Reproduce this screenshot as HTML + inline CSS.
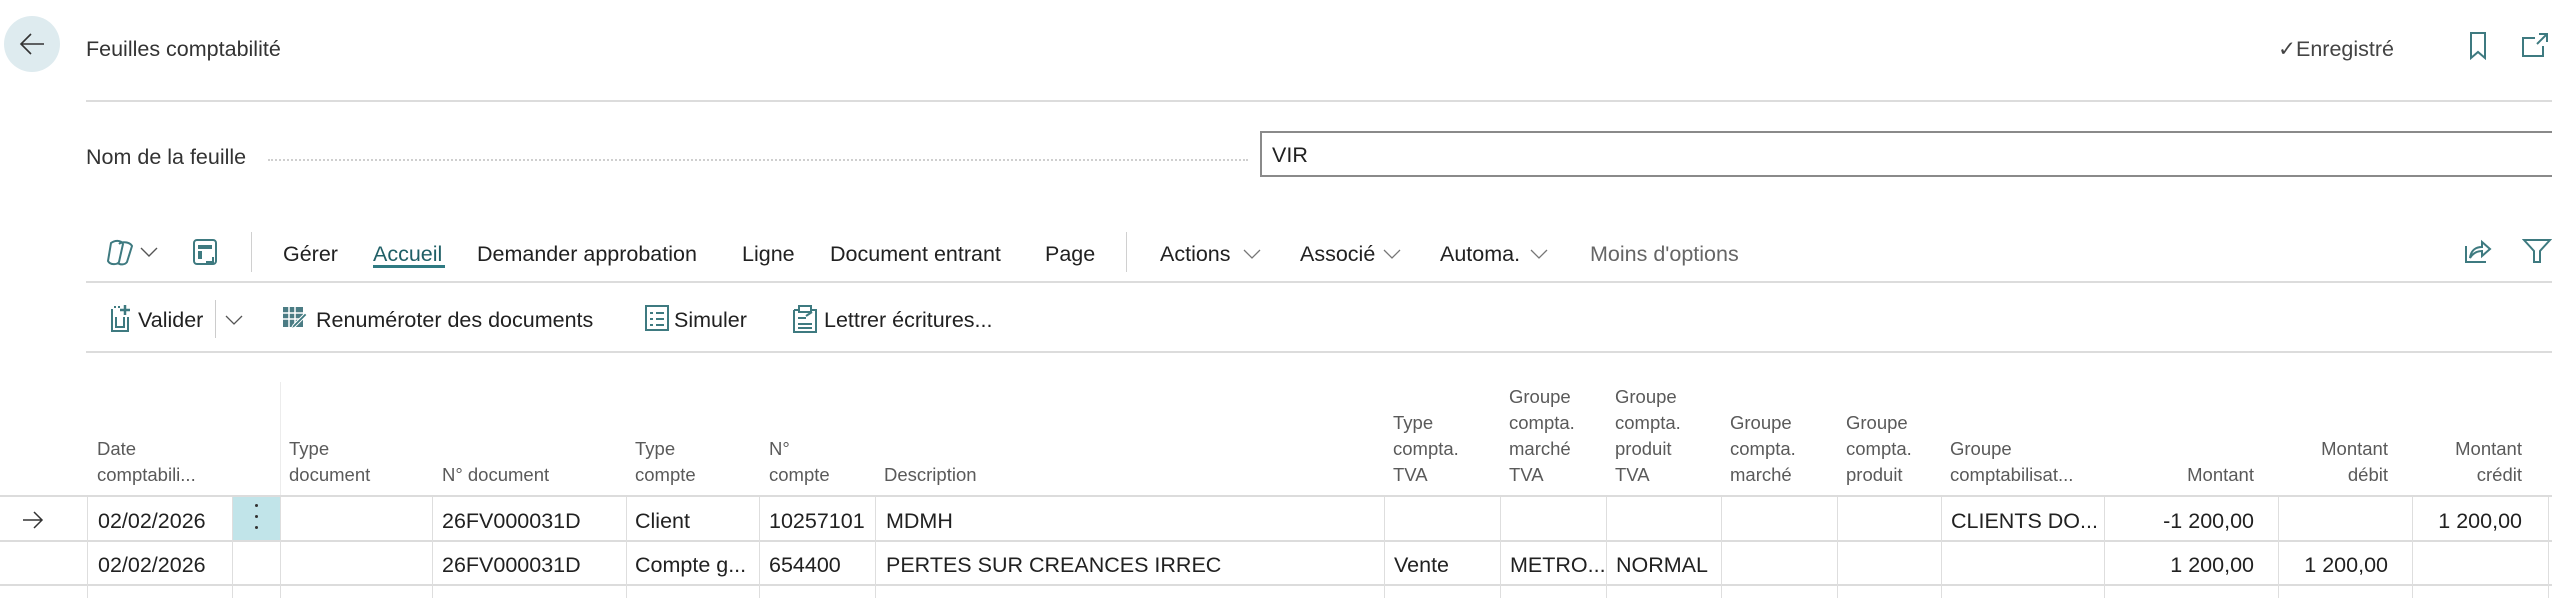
<!DOCTYPE html>
<html><head><meta charset="utf-8"><style>
*{margin:0;padding:0;box-sizing:border-box}
body{width:2552px;height:598px;background:#fff;position:relative;overflow:hidden;font-family:"Liberation Sans",sans-serif;color:#212121}
.t{position:absolute;white-space:nowrap;font-size:21.5px;line-height:24px}
.h{position:absolute;white-space:nowrap;font-size:18.5px;line-height:26px;color:#5a5a5a}
.hl{position:absolute;height:2px;background:#dcdcdc}
.vl{position:absolute;width:1px;background:#dedede}
svg{position:absolute}
.ic{stroke:#3e7a80;fill:none;stroke-width:2}
</style></head><body>
<!-- header -->
<div style="position:absolute;left:4px;top:16px;width:56px;height:56px;border-radius:50%;background:#deebef"></div>
<svg style="left:18px;top:32px" width="28" height="24" viewBox="0 0 28 24"><path d="M26 12H3M13 2L3 12l10 10" stroke="#333" stroke-width="1.6" fill="none"/></svg>
<div class="t" style="left:86px;top:37px;color:#333">Feuilles comptabilité</div>
<div class="t" style="left:2278px;top:37px;color:#444">✓Enregistré</div>
<svg style="left:2468px;top:32px" width="20" height="28" viewBox="0 0 20 28"><path class="ic" d="M3 1h14v25l-7-6-7 6z"/></svg>
<svg style="left:2521px;top:32px" width="28" height="26" viewBox="0 0 28 26"><path class="ic" d="M14 6H2v18h20V14M18 2h8v8M26 2L16 12"/></svg>
<div class="hl" style="left:86px;top:100px;width:2466px"></div>

<div class="t" style="left:86px;top:145px;color:#333">Nom de la feuille</div>
<div style="position:absolute;left:268px;top:159px;width:980px;border-top:2px dotted #cfcfcf"></div>
<div style="position:absolute;left:1260px;top:131px;width:1300px;height:46px;border:2px solid #8a8a8a"></div>
<div class="t" style="left:1272px;top:143px">VIR</div>

<!-- toolbar -->
<svg style="left:106px;top:239px" width="30" height="28" viewBox="0 0 30 28"><path class="ic" d="M5 4c4-3 10-3 12 1l-4 18c-2 3-9 3-11-1zM13 5c3-3 11-2 13 2l-5 16c-2 3-7 3-9 1"/></svg>
<svg style="left:140px;top:246px" width="18" height="12" viewBox="0 0 18 12"><path d="M1 2l8 8 8-8" stroke="#555" stroke-width="1.4" fill="none"/></svg>
<svg style="left:192px;top:238px" width="26" height="30" viewBox="0 0 26 30"><rect class="ic" x="2" y="2" width="22" height="24" rx="3"/><rect x="6" y="7" width="14" height="4" fill="#3e7a80"/><rect x="6" y="13" width="4" height="8" fill="#3e7a80"/><path class="ic" d="M14 24h7v-5" stroke-width="1.5"/></svg>
<div class="vl" style="left:251px;top:232px;height:40px;background:#d0d0d0"></div>
<div class="t" style="left:283px;top:242px">Gérer</div>
<div class="t" style="left:373px;top:242px;color:#1f5f66">Accueil</div>
<div style="position:absolute;left:373px;top:265px;width:72px;height:3px;background:#2f7a82"></div>
<div class="t" style="left:477px;top:242px">Demander approbation</div>
<div class="t" style="left:742px;top:242px">Ligne</div>
<div class="t" style="left:830px;top:242px">Document entrant</div>
<div class="t" style="left:1045px;top:242px">Page</div>
<div class="vl" style="left:1126px;top:232px;height:40px;background:#d0d0d0"></div>
<div class="t" style="left:1160px;top:242px">Actions</div>
<svg style="left:1243px;top:248px" width="18" height="12" viewBox="0 0 18 12"><path d="M1 2l8 8 8-8" stroke="#777" stroke-width="1.3" fill="none"/></svg>
<div class="t" style="left:1300px;top:242px">Associé</div>
<svg style="left:1383px;top:248px" width="18" height="12" viewBox="0 0 18 12"><path d="M1 2l8 8 8-8" stroke="#777" stroke-width="1.3" fill="none"/></svg>
<div class="t" style="left:1440px;top:242px">Automa.</div>
<svg style="left:1530px;top:248px" width="18" height="12" viewBox="0 0 18 12"><path d="M1 2l8 8 8-8" stroke="#777" stroke-width="1.3" fill="none"/></svg>
<div class="t" style="left:1590px;top:242px;color:#666">Moins d'options</div>
<svg style="left:2464px;top:238px" width="28" height="26" viewBox="0 0 28 26"><path class="ic" d="M2 8v16h20M6 20c1-8 6-11 12-11V4l8 7-8 7v-5c-5 0-9 2-12 7z"/></svg>
<svg style="left:2522px;top:238px" width="30" height="26" viewBox="0 0 30 26"><path class="ic" d="M2 2h26l-10 11v11h-6V13z"/></svg>
<div class="hl" style="left:86px;top:281px;width:2466px"></div>

<!-- action row -->
<svg style="left:110px;top:303px" width="24" height="30" viewBox="0 0 24 30"><path class="ic" d="M2 6v22h16V14M6 14v10h8V14"/><path d="M15 2v10M10 7h10" stroke="#3e7a80" stroke-width="2.5"/><path d="M4 4h2M8 4h2" stroke="#3e7a80" stroke-width="2"/></svg>
<div class="t" style="left:138px;top:308px">Valider</div>
<div class="vl" style="left:215px;top:300px;height:38px;background:#ccc"></div>
<svg style="left:225px;top:314px" width="18" height="12" viewBox="0 0 18 12"><path d="M1 2l8 8 8-8" stroke="#555" stroke-width="1.3" fill="none"/></svg>
<svg style="left:281px;top:305px" width="28" height="26" viewBox="0 0 28 26"><rect x="2" y="2" width="20" height="20" fill="#4b7c84"/><path d="M2 8h20M2 14h20M8 2v20M14 2v20" stroke="#fff" stroke-width="1.5"/><path d="M10 24l4-2 12-12-2-2-12 12z" fill="#3e7a80" stroke="#fff" stroke-width="1"/></svg>
<div class="t" style="left:316px;top:308px">Renuméroter des documents</div>
<svg style="left:644px;top:304px" width="26" height="28" viewBox="0 0 26 28"><rect class="ic" x="2" y="2" width="22" height="24"/><path d="M6 9h3M6 15h3M6 21h3M12 9h8M12 15h8M12 21h8" stroke="#3e7a80" stroke-width="2"/></svg>
<div class="t" style="left:674px;top:308px">Simuler</div>
<svg style="left:792px;top:302px" width="26" height="32" viewBox="0 0 26 32"><path class="ic" d="M2 8h4M20 8h4v22H2V8"/><rect x="7" y="4" width="12" height="6" class="ic"/><path d="M6 16h8M6 22h14M6 26h14" stroke="#3e7a80" stroke-width="2"/><path d="M14 14l6-4" stroke="#3e7a80" stroke-width="2"/></svg>
<div class="t" style="left:824px;top:308px">Lettrer écritures...</div>
<div class="hl" style="left:86px;top:351px;width:2466px"></div>

<!-- grid header -->
<div class="vl" style="left:280px;top:382px;height:114px;background:#ececec"></div>
<div class="h" style="left:97px;top:436px">Date<br>comptabili...</div>
<div class="h" style="left:289px;top:436px">Type<br>document</div>
<div class="h" style="left:442px;top:462px">N° document</div>
<div class="h" style="left:635px;top:436px">Type<br>compte</div>
<div class="h" style="left:769px;top:436px">N°<br>compte</div>
<div class="h" style="left:884px;top:462px">Description</div>
<div class="h" style="left:1393px;top:410px">Type<br>compta.<br>TVA</div>
<div class="h" style="left:1509px;top:384px">Groupe<br>compta.<br>marché<br>TVA</div>
<div class="h" style="left:1615px;top:384px">Groupe<br>compta.<br>produit<br>TVA</div>
<div class="h" style="left:1730px;top:410px">Groupe<br>compta.<br>marché</div>
<div class="h" style="left:1846px;top:410px">Groupe<br>compta.<br>produit</div>
<div class="h" style="left:1950px;top:436px">Groupe<br>comptabilisat...</div>
<div class="h" style="left:2104px;top:462px;width:150px;text-align:right">Montant</div>
<div class="h" style="left:2238px;top:436px;width:150px;text-align:right">Montant<br>débit</div>
<div class="h" style="left:2372px;top:436px;width:150px;text-align:right">Montant<br>crédit</div>

<!-- grid lines -->
<div class="hl" style="left:0;top:495px;width:2552px"></div>
<div class="hl" style="left:0;top:540px;width:2552px"></div>
<div class="hl" style="left:0;top:584px;width:2552px"></div>
<div style="position:absolute;left:232px;top:497px;width:48px;height:43px;background:#c1e4e9"></div>
<div style="position:absolute;left:255px;top:504px;width:3px;height:3px;background:#333;border-radius:50%;box-shadow:0 11px 0 #333,0 22px 0 #333"></div>
<div class="vl" style="left:87px;top:497px;height:101px"></div>
<div class="vl" style="left:232px;top:497px;height:101px"></div>
<div class="vl" style="left:280px;top:497px;height:101px"></div>
<div class="vl" style="left:432px;top:497px;height:101px"></div>
<div class="vl" style="left:626px;top:497px;height:101px"></div>
<div class="vl" style="left:759px;top:497px;height:101px"></div>
<div class="vl" style="left:875px;top:497px;height:101px"></div>
<div class="vl" style="left:1384px;top:497px;height:101px"></div>
<div class="vl" style="left:1500px;top:497px;height:101px"></div>
<div class="vl" style="left:1606px;top:497px;height:101px"></div>
<div class="vl" style="left:1721px;top:497px;height:101px"></div>
<div class="vl" style="left:1837px;top:497px;height:101px"></div>
<div class="vl" style="left:1941px;top:497px;height:101px"></div>
<div class="vl" style="left:2104px;top:497px;height:101px"></div>
<div class="vl" style="left:2278px;top:497px;height:101px"></div>
<div class="vl" style="left:2412px;top:497px;height:101px"></div>
<div class="vl" style="left:2548px;top:497px;height:101px"></div>

<!-- rows -->
<svg style="left:22px;top:510px" width="22" height="20" viewBox="0 0 22 20"><path d="M1 10h19M12 2l8 8-8 8" stroke="#333" stroke-width="1.5" fill="none"/></svg>
<div class="t" style="left:98px;top:509px">02/02/2026</div>
<div class="t" style="left:442px;top:509px">26FV000031D</div>
<div class="t" style="left:635px;top:509px">Client</div>
<div class="t" style="left:769px;top:509px">10257101</div>
<div class="t" style="left:886px;top:509px">MDMH</div>
<div class="t" style="left:1951px;top:509px">CLIENTS DO...</div>
<div class="t" style="left:2104px;top:509px;width:150px;text-align:right">-1 200,00</div>
<div class="t" style="left:2372px;top:509px;width:150px;text-align:right">1 200,00</div>

<div class="t" style="left:98px;top:553px">02/02/2026</div>
<div class="t" style="left:442px;top:553px">26FV000031D</div>
<div class="t" style="left:635px;top:553px">Compte g...</div>
<div class="t" style="left:769px;top:553px">654400</div>
<div class="t" style="left:886px;top:553px">PERTES SUR CREANCES IRREC</div>
<div class="t" style="left:1394px;top:553px">Vente</div>
<div class="t" style="left:1510px;top:553px">METRO...</div>
<div class="t" style="left:1616px;top:553px">NORMAL</div>
<div class="t" style="left:2104px;top:553px;width:150px;text-align:right">1 200,00</div>
<div class="t" style="left:2238px;top:553px;width:150px;text-align:right">1 200,00</div>
</body></html>
